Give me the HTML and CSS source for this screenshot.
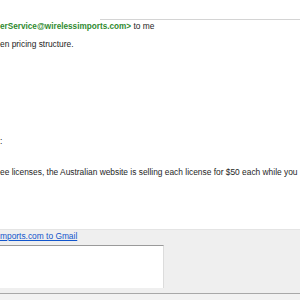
FILE: index.html
```html
<!DOCTYPE html>
<html>
<head>
<meta charset="utf-8">
<link rel="stylesheet" href="styles.css">
</head>
<body>
<div class="page">
  <div class="rule"></div>
  <div class="sender"><span class="addr">erService@wirelessimports.com&gt;</span> to me</div>
  <div class="line l1">en pricing structure.</div>
  <div class="line l2">:</div>
  <div class="line l3">ee licenses, the Australian website is selling each license for $50 each while you</div>
  <div class="band">
    <a class="link" href="#">mports.com to Gmail</a>
    <div class="box"></div>
    <div class="foot"></div>
  </div>
</div>
</body>
</html>
```
FILE: styles.css
```css
html, body {
  margin: 0;
  padding: 0;
  background: #fff;
}
.page {
  width: 300px;
  height: 300px;
  overflow: hidden;
  font-family: "Liberation Sans", Arial, sans-serif;
  font-size: 8.4px;
  line-height: 10px;
  color: #1e1e1e;
  display: flex;
  flex-direction: column;
}
.rule {
  margin: 19px 0 0 100px;
  border-top: 1px solid #d4d4d4;
}
.sender {
  margin-top: 1px;
  white-space: nowrap;
}
.addr {
  color: #2f8a2f;
  font-weight: bold;
  font-size: 8.2px;
}
.line {
  white-space: nowrap;
}
.l1 { margin-top: 7px; }
.l2 { margin-top: 87px; }
.l3 { margin-top: 21px; }
.band {
  margin-top: 52px;
  flex: 1;
  background: #efefef;
  border-top: 1px solid #e4e4e4;
  padding-top: 1px;
  display: flex;
  flex-direction: column;
}
.link {
  color: #1155cc;
  text-decoration: underline;
  white-space: nowrap;
  align-self: flex-start;
}
.box {
  margin-top: 4px;
  width: 163px;
  height: 42px;
  background: #fff;
  border-top: 1px solid #9a9a9a;
  border-right: 1px solid #dcdcdc;
}
.foot {
  margin-top: 5px;
  border-top: 1px solid #a8a8a8;
  flex: 1;
  background: #f2f2f2;
}
```
